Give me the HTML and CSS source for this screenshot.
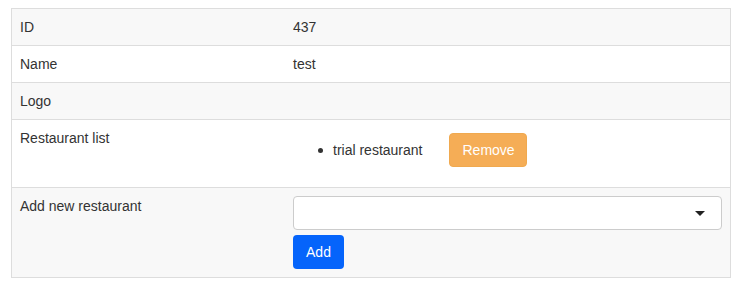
FILE: index.html
```html
<!DOCTYPE html>
<html lang="en">
<head>
    <meta charset="UTF-8">
    <title>Restaurant group</title>
    <link rel="stylesheet" href="styles.css">
</head>
<body>
    <table class="detalle">
        <tr class="par">
            <td class="etiqueta">ID</td>
            <td>437</td>
        </tr>
        <tr>
            <td class="etiqueta">Name</td>
            <td>test</td>
        </tr>
        <tr class="par">
            <td class="etiqueta">Logo</td>
            <td></td>
        </tr>
        <tr>
            <td class="etiqueta">Restaurant list</td>
            <td>
                <ul class="lista">
                    <li>
                        <span>trial restaurant</span>
                        <button class="btn btn-quitar">Remove</button>
                    </li>
                </ul>
            </td>
        </tr>
        <tr class="par">
            <td class="etiqueta">Add new restaurant</td>
            <td>
                <div class="selector">
                    <span class="flecha"></span>
                </div>
                <button class="btn btn-agregar">Add</button>
            </td>
        </tr>
    </table>
</body>
</html>
```

FILE: styles.css
```css
body {
    font-family: "Liberation Sans", Arial, sans-serif;
    font-size: 14px;
    line-height: 20px;
    color: #333;
    margin: 0;
    padding: 8px 10px 0 11px;
}

.detalle {
    width: 720px;
    border-collapse: collapse;
    border: 1px solid #ddd;
}

.detalle td {
    border-top: 1px solid #ddd;
    padding: 8px;
    vertical-align: top;
}

.detalle tr:first-child td {
    border-top: none;
}

.par {
    background-color: #f8f8f8;
}

.etiqueta {
    width: 257px;
}

.lista {
    margin: 5px 0 12px;
    padding-left: 40px;
    list-style: none;
}

.lista li {
    display: flex;
    align-items: center;
    gap: 27px;
}

.lista li::before {
    content: "";
    width: 5px;
    height: 5px;
    border-radius: 50%;
    background: #333;
    margin-left: -15px;
    margin-right: -17px;
}

.btn {
    font-family: inherit;
    font-size: 14px;
    color: white;
    height: 34px;
    padding: 0 12px;
    border-radius: 4px;
    border: 1px solid transparent;
}

.btn-quitar {
    background-color: #f5ad56;
    border-color: #f0a94f;
    width: 78px;
}

.btn-agregar {
    background-color: #0564fb;
    width: 51px;
    margin-top: 5px;
    display: block;
}

.selector {
    position: relative;
    height: 32px;
    border: 1px solid #ccc;
    border-radius: 4px;
    background: white;
}

.flecha {
    position: absolute;
    right: 16px;
    top: 14px;
    border-left: 5px solid transparent;
    border-right: 5px solid transparent;
    border-top: 5px solid #222;
}
```
